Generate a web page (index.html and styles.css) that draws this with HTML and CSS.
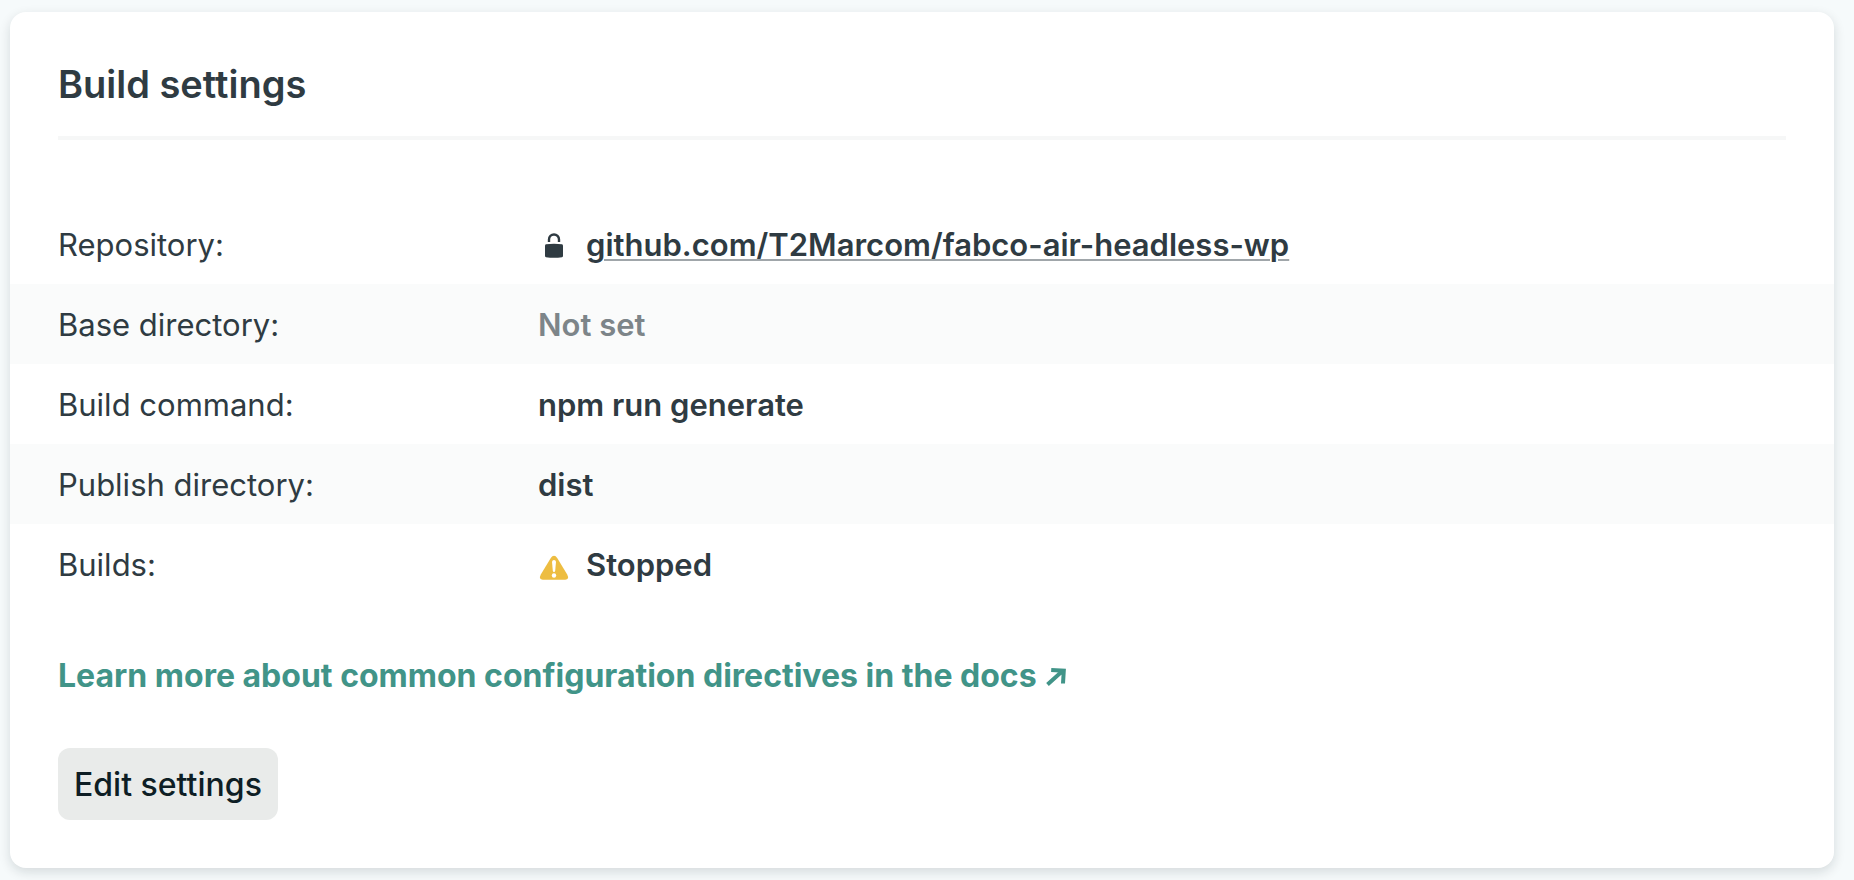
FILE: index.html
```html
<!DOCTYPE html>
<html lang="en">
<head>
    <meta charset="UTF-8">
    <meta name="viewport" content="width=device-width, initial-scale=1.0">
    <title>Build settings</title>
    <link rel="stylesheet" href="styles.css">
</head>
<body>
    <section class="card">
        <h2>Build settings</h2>

        <dl class="settings">
            <div class="row">
                <dt>Repository:</dt>
                <dd>
                    <svg class="icon" viewBox="0 -1 32 32" aria-hidden="true">
                        <path d="M11 12V9.500a5 5 0 0 1 10 0V12" fill="none" stroke="#2f3b42" stroke-width="2.400"/>
                        <path d="M7 15.500q0-1 1-1.200q8-1.300 16 0q1 .2 1 1.200v10.500q0 1-1 1.200q-8 1.300-16 0q-1-.2-1-1.200z" fill="#2f3b42"/>
                    </svg>
                    <a class="repo" href="#">github.com/T2Marcom/fabco-air-headless-wp</a>
                </dd>
            </div>
            <div class="row">
                <dt>Base directory:</dt>
                <dd class="empty">Not set</dd>
            </div>
            <div class="row">
                <dt>Build command:</dt>
                <dd>npm run generate</dd>
            </div>
            <div class="row">
                <dt>Publish directory:</dt>
                <dd>dist</dd>
            </div>
            <div class="row">
                <dt>Builds:</dt>
                <dd>
                    <svg class="icon" viewBox="0 -3 32 32" aria-hidden="true">
                        <path d="M12.800 6q1.400-2.300 3.200-2.300t3.200 2.300l10 16.500q2.500 5-2 5.200H4.800q-4.500-.2-2-5.200z" fill="#edbd41"/>
                        <path d="M14 9.800q.2-1.800 2-1.800t2 1.800l-.8 9q-.2 1.200-1.200 1.200t-1.200-1.200z" fill="#fff"/>
                        <circle cx="16" cy="23.500" r="2.200" fill="#fff"/>
                    </svg>
                    <span>Stopped</span>
                </dd>
            </div>
        </dl>

        <p class="docs">
            <a href="#">Learn more about common configuration directives in the docs
                <svg class="arrow" viewBox="0 0 20 20" aria-hidden="true">
                    <path d="M1.500 17.500L16.500 4M5.200 3L17.800 3.700L17 16.500" fill="none" stroke="currentColor" stroke-width="4"/>
                </svg></a>
        </p>

        <button type="button">Edit settings</button>
    </section>
</body>
</html>
```

FILE: styles.css
```css
body {
    margin: 0;
    padding: 12px 20px 12px 10px;
    background-color: #f6fafb;
    color: #2f3b42;
    font-family: Inter, "Liberation Sans", sans-serif;
    font-size: 31px;
    line-height: 48px;
}

.card {
    padding: 48px;
    background-color: #fff;
    border-radius: 16px;
    box-shadow: 0 4px 12px rgba(14, 30, 37, 0.14);
}

h2 {
    margin: 0;
    padding-bottom: 28px;
    border-bottom: 4px solid #f6f7f7;
    font-size: 38px;
    font-weight: 600;
}

.settings {
    margin: 64px -48px 48px;
}

.row {
    display: flex;
    padding: 17px 48px 15px;
}

.row:nth-child(even) {
    background-color: #fafbfb;
}

dt {
    flex: 0 0 480px;
}

dd {
    display: flex;
    align-items: center;
    gap: 16px;
    margin: 0;
    font-weight: 600;
}

.icon {
    width: 32px;
    height: 32px;
}

.repo {
    color: inherit;
    text-decoration: underline;
    text-decoration-color: #a0a6aa;
    text-decoration-thickness: 2px;
    text-underline-offset: 3px;
}

.empty {
    color: #7d8589;
}

.docs {
    margin: 0 0 48px;
    font-size: 32px;
    font-weight: 700;
}

.docs a {
    color: #419488;
    text-decoration: none;
}

.arrow {
    width: 20px;
    height: 20px;
    margin-left: 2px;
}

button {
    display: block;
    padding: 13px 16px 11px;
    border: none;
    border-radius: 12px;
    background-color: #e9ebea;
    color: #0e1e25;
    font: inherit;
    font-size: 32px;
    font-weight: 500;
    cursor: pointer;
}
```
